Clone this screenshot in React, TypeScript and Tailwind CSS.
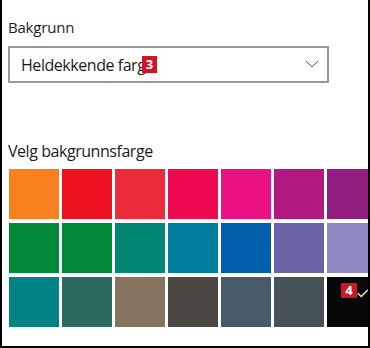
// --- Colour swatches ----------------------------------------------------
const rows: string[][] = [
  ["#F7811F", "#EE1122", "#EE2B3A", "#EF0950", "#EB1182", "#AF1980", "#911E7F"],
  ["#028A3A", "#028A3A", "#018674", "#017E9D", "#015EAB", "#6A64A7", "#8E88C0"],
  ["#018386", "#2A6A60", "#847460", "#4B4844", "#475B6A", "#45525A", "#07080A"],
];

function Badge({ n, className }: { n: string; className: string }) {
  return (
    <span
      className={`absolute flex items-center justify-center bg-[#CF1623] text-white font-bold text-[13px] leading-none ${className}`}
    >
      {n}
    </span>
  );
}

// --- Page ---------------------------------------------------------------
export default function App() {
  const swatches = rows.flat();
  return (
    <div
      className="w-[370px] h-[348px] bg-white border-x-2 border-b-2 border-black overflow-hidden pl-[6px] text-[#1b1b1b]"
      style={{ fontFamily: '"Open Sans", "Noto Sans", sans-serif' }}
    >
      {/* Background select */}
      <div className="pt-[17px] text-[15px] leading-[20px] tracking-[-0.2px]">Bakgrunn</div>
      <div className="relative mt-[9px] w-[321px] h-[37px] border-2 border-[#999999] flex items-center justify-between pl-[11px] pr-[8px]">
        <span className="text-[16px] leading-[22px] tracking-[-0.45px]">Heldekkende farge</span>
        <Badge n="3" className="left-[132px] top-[8px] w-[15px] h-[17px]" />
        <svg width="14" height="8" viewBox="0 0 14 8" className="mb-[1px]">
          <path d="M0.5 0.8 L7 6.8 L13.5 0.8" fill="none" stroke="#555" strokeWidth="1" />
        </svg>
      </div>

      {/* Colour picker */}
      <div className="mt-[58px] text-[16px] leading-[20px] tracking-[-0.45px]">Velg bakgrunnsfarge</div>
      <div className="mt-[8px] ml-[1px] grid grid-cols-[repeat(7,50px)] gap-x-[3px] gap-y-[4px] w-max">
        {swatches.map((c, i) => (
          <div key={i} className="relative h-[50px]" style={{ backgroundColor: c }}>
            {i === swatches.length - 1 && (
              <>
                <Badge n="4" className="left-[14px] top-[6px] w-[16px] h-[15px]" />
                <svg width="12" height="9" viewBox="0 0 12 9" className="absolute left-[30px] top-[12px]">
                  <path d="M0.8 4.3 L4.2 7.6 L11 0.8" fill="none" stroke="#e6e6e6" strokeWidth="1.4" />
                </svg>
              </>
            )}
          </div>
        ))}
      </div>
    </div>
  );
}
